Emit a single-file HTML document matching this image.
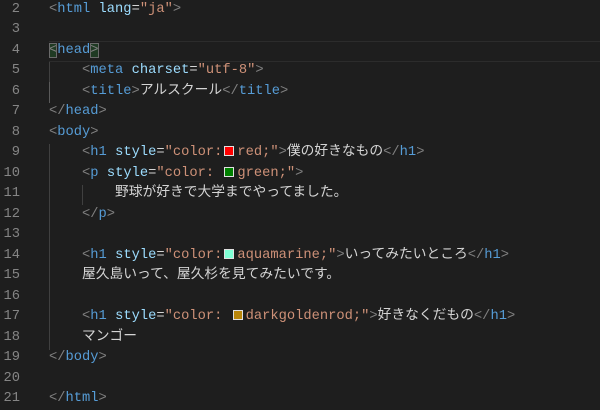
<!DOCTYPE html>
<html><head><meta charset="utf-8"><style>
html,body{margin:0;padding:0;background:#1e1e1e;width:600px;height:400px;overflow:hidden}
.ed{position:absolute;left:0;top:-21px;width:600px;font-family:"Liberation Mono",monospace;font-size:13.75px}
.l{position:relative;height:20.5px;line-height:20.5px;white-space:pre;overflow:visible}
.n{position:absolute;left:0;top:0;width:20px;text-align:right;color:#858585;height:20.5px}
.c{position:absolute;left:49px;top:0;height:20.5px;color:#d4d4d4}
.b{color:#808080}.t{color:#569cd6}.a{color:#9cdcfe}.s{color:#ce9178}
.j{font-family:"Noto Sans CJK JP",sans-serif;color:#d4d4d4;line-height:1}
.sw{display:inline-block;width:8px;height:8px;border:1px solid #e0e0e0;margin:0 3px 0 2px;vertical-align:-1px;line-height:0}
.cur{position:absolute;left:49px;right:0;top:0;height:19px;border-top:1px solid #2c2c2c;border-bottom:1px solid #2c2c2c}
.bm{background:#1f3a23;outline:1px solid #6a6a6a;outline-offset:-1px}
.g{position:absolute;width:1px;background:#404040}
</style></head><body>
<div class="ed">
<div class="l"><span class="n">1</span><span class="c"></span></div>
<div class="l"><span class="n">2</span><span class="c"><span class="b">&lt;</span><span class="t">html</span> <span class="a">lang</span>=<span class="s">"ja"</span><span class="b">&gt;</span></span></div>
<div class="l"><span class="n">3</span></div>
<div class="l"><div class="cur"></div><span class="n">4</span><span class="c"><span class="b bm">&lt;</span><span class="t">head</span><span class="b bm">&gt;</span></span></div>
<div class="l"><span class="n">5</span><span class="c">    <span class="b">&lt;</span><span class="t">meta</span> <span class="a">charset</span>=<span class="s">"utf-8"</span><span class="b">&gt;</span></span></div>
<div class="l"><span class="n">6</span><span class="c">    <span class="b">&lt;</span><span class="t">title</span><span class="b">&gt;</span><span class="j">アルスクール</span><span class="b">&lt;/</span><span class="t">title</span><span class="b">&gt;</span></span></div>
<div class="l"><span class="n">7</span><span class="c"><span class="b">&lt;/</span><span class="t">head</span><span class="b">&gt;</span></span></div>
<div class="l"><span class="n">8</span><span class="c"><span class="b">&lt;</span><span class="t">body</span><span class="b">&gt;</span></span></div>
<div class="l"><span class="n">9</span><span class="c">    <span class="b">&lt;</span><span class="t">h1</span> <span class="a">style</span>=<span class="s">"color:<span class="sw" style="background:red"></span>red;"</span><span class="b">&gt;</span><span class="j">僕の好きなもの</span><span class="b">&lt;/</span><span class="t">h1</span><span class="b">&gt;</span></span></div>
<div class="l"><span class="n">10</span><span class="c">    <span class="b">&lt;</span><span class="t">p</span> <span class="a">style</span>=<span class="s">"color: <span class="sw" style="background:green"></span>green;"</span><span class="b">&gt;</span></span></div>
<div class="l"><span class="n">11</span><span class="c">        <span class="j">野球が好きで大学までやってました。</span></span></div>
<div class="l"><span class="n">12</span><span class="c">    <span class="b">&lt;/</span><span class="t">p</span><span class="b">&gt;</span></span></div>
<div class="l"><span class="n">13</span></div>
<div class="l"><span class="n">14</span><span class="c">    <span class="b">&lt;</span><span class="t">h1</span> <span class="a">style</span>=<span class="s">"color:<span class="sw" style="background:aquamarine"></span>aquamarine;"</span><span class="b">&gt;</span><span class="j">いってみたいところ</span><span class="b">&lt;/</span><span class="t">h1</span><span class="b">&gt;</span></span></div>
<div class="l"><span class="n">15</span><span class="c">    <span class="j">屋久島いって、屋久杉を見てみたいです。</span></span></div>
<div class="l"><span class="n">16</span></div>
<div class="l"><span class="n">17</span><span class="c">    <span class="b">&lt;</span><span class="t">h1</span> <span class="a">style</span>=<span class="s">"color: <span class="sw" style="background:darkgoldenrod"></span>darkgoldenrod;"</span><span class="b">&gt;</span><span class="j">好きなくだもの</span><span class="b">&lt;/</span><span class="t">h1</span><span class="b">&gt;</span></span></div>
<div class="l"><span class="n">18</span><span class="c">    <span class="j">マンゴー</span></span></div>
<div class="l"><span class="n">19</span><span class="c"><span class="b">&lt;/</span><span class="t">body</span><span class="b">&gt;</span></span></div>
<div class="l"><span class="n">20</span></div>
<div class="l"><span class="n">21</span><span class="c"><span class="b">&lt;/</span><span class="t">html</span><span class="b">&gt;</span></span></div>
</div>
<div class="g" style="left:49px;top:62px;height:20px"></div>
<div class="g" style="left:49px;top:82px;height:21px;background:#5a5a5a"></div>
<div class="g" style="left:49px;top:144px;height:206px"></div>
<div class="g" style="left:82px;top:185px;height:20px"></div>
</body></html>
